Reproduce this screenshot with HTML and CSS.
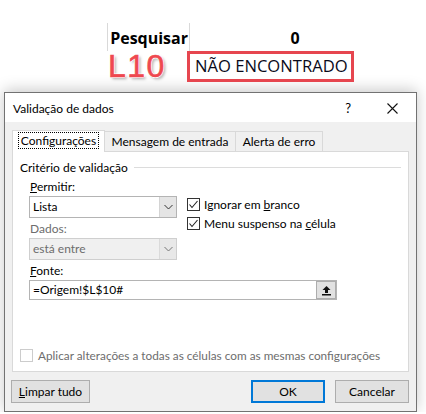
FILE: index.html
```html
<!DOCTYPE html>
<html lang="pt">
<head>
  <meta charset="UTF-8" />
  <meta name="viewport" content="width=device-width, initial-scale=1.0"/>
  <title>Validação de dados</title>
  <link rel="stylesheet" href="styles.css">
</head>
<body>
  <div class="sheet">
    <div class="row-head">
      <div class="cell-label">Pesquisar</div>
      <div class="cell-value">0</div>
    </div>
    <div class="row-result">
      <div class="ref">L10</div>
      <div class="result">NÃO ENCONTRADO</div>
    </div>
  </div>

  <div class="dialog">
    <div class="titlebar">
      <span class="title">Validação de dados</span>
      <span class="help">?</span>
      <svg class="close" width="11" height="11" viewBox="0 0 11 11">
        <path d="M0.5 0.5 L10.5 10.5 M10.5 0.5 L0.5 10.5" stroke="#111" stroke-width="1.1" fill="none"/>
      </svg>
    </div>

    <div class="body">
      <div class="tabs">
        <div class="tab active"><span class="focus">Configurações</span></div>
        <div class="tab tab-msg">Mensagem de entrada</div>
        <div class="tab tab-err">Alerta de erro</div>
      </div>

      <div class="panel">
        <div class="legend"><span>Critério de validação</span></div>

        <div class="label"><u>P</u>ermitir:</div>
        <div class="allow-row">
          <div class="select">
            <span class="value">Lista</span>
            <span class="arrow">
              <svg width="9" height="6" viewBox="0 0 9 6"><path d="M0.5 1 L4.5 5 L8.5 1" stroke="#333" fill="none"/></svg>
            </span>
          </div>
          <div class="checks">
            <div class="check"><span class="box">
              <svg width="11" height="11" viewBox="0 0 11 11"><path d="M1.5 5.5 L4 8.5 L9.5 2" stroke="#222" stroke-width="1.1" fill="none"/></svg>
            </span><span>Ignorar em <u>b</u>ranco</span></div>
            <div class="check"><span class="box">
              <svg width="11" height="11" viewBox="0 0 11 11"><path d="M1.5 5.5 L4 8.5 L9.5 2" stroke="#222" stroke-width="1.1" fill="none"/></svg>
            </span><span>Menu suspenso na <u>c</u>élula</span></div>
          </div>
        </div>

        <div class="label muted gap-dados">Dados:</div>
        <div class="select disabled">
          <span class="value">está entre</span>
          <span class="arrow">
            <svg width="9" height="6" viewBox="0 0 9 6"><path d="M0.5 1 L4.5 5 L8.5 1" stroke="#777" fill="none"/></svg>
          </span>
        </div>

        <div class="label gap-fonte"><u>F</u>onte:</div>
        <div class="source">
          <span class="value">=Origem!$L$10#</span>
          <span class="pick">
            <svg width="11" height="11" viewBox="0 0 11 11">
              <path d="M5.5 1 L1.5 5 L4 5 L4 8 L7 8 L7 5 L9.5 5 Z" fill="#111"/>
              <rect x="1" y="9" width="9" height="1.5" fill="#111"/>
            </svg>
          </span>
        </div>

        <div class="apply"><span class="box"></span><span>Aplicar alterações a todas as células com as mesmas configurações</span></div>
      </div>

      <div class="buttons">
        <button class="btn clear"><u>L</u>impar tudo</button>
        <button class="btn ok">OK</button>
        <button class="btn cancel">Cancelar</button>
      </div>
    </div>
  </div>
</body>
</html>
```

FILE: styles.css
```css
body {
  margin: 0;
  background: #ffffff;
  font-family: Lato, "Noto Sans", sans-serif;
  font-size: 12px;
  color: #000;
}

/* spreadsheet snippet above the dialog */
.sheet {
  height: 82px;
  padding-top: 23px;
  box-sizing: border-box;
}

.row-head {
  display: flex;
  height: 28px;
  margin-left: 107px;
}

.cell-label {
  width: 83px;
  border-left: 1px solid #d9d9d9;
  border-right: 1px solid #d9d9d9;
  font-family: "Open Sans", sans-serif;
  font-weight: bold;
  font-size: 16px;
  line-height: 30px;
  text-align: right;
  padding-right: 1px;
  box-sizing: border-box;
}

.cell-value {
  width: 210px;
  font-family: "Open Sans", sans-serif;
  font-weight: bold;
  font-size: 16px;
  line-height: 30px;
  text-align: center;
}

.row-result {
  display: flex;
  height: 31px;
  margin-left: 108px;
}

.ref {
  width: 79px;
  font-family: "Liberation Sans", Arial, sans-serif;
  font-size: 32px;
  line-height: 31px;
  letter-spacing: 1.5px;
  color: #ef4950;
  -webkit-text-stroke: 0.6px #ef4950;
  text-shadow: 1px 0 0 #fff, -1px 0 0 #fff, 0 1px 0 #fff, 0 -1px 0 #fff, 2px 2px 3px rgba(0,0,0,0.35);
}

.result {
  width: 167px;
  height: 31px;
  border: 3px solid #e6464f;
  box-sizing: border-box;
  font-family: "Open Sans", sans-serif;
  font-size: 16.6px;
  line-height: 24px;
  padding-left: 5px;
  color: #0a0a1a;
  background: #fff;
  position: relative;
  z-index: 2;
}

/* dialog */
.dialog {
  margin: 10px 0 0 4px;
  width: 413px;
  height: 320px;
  border: 1px solid #727272;
  box-sizing: border-box;
  background: #f0f0f0;
  box-shadow: 0 -2px 14px rgba(0,0,0,0.22);
  position: relative;
}

.titlebar {
  height: 29px;
  background: #fff;
  display: flex;
  align-items: center;
  padding-left: 8px;
}

.title {
  flex: 1;
  padding-top: 1px;
}

.help {
  font-size: 13px;
  margin-right: 36px;
  padding-top: 1px;
}

.close {
  margin-right: 18px;
  margin-top: 2px;
}

.body {
  padding: 9px 7px 0 7px;
}

.tabs {
  display: flex;
  align-items: flex-end;
  height: 20px;
}

.tab {
  height: 20px;
  line-height: 19px;
  text-align: center;
  border: 1px solid #d9d9d9;
  border-bottom: none;
  border-left: none;
  box-sizing: border-box;
  background: #f0f0f0;
}

.tab-msg { width: 131px; }
.tab-err { width: 87px; }

.tab.active {
  width: 93px;
  height: 22px;
  margin-bottom: -1px;
  background: #fff;
  border-left: 1px solid #d9d9d9;
  padding-top: 2px;
  position: relative;
  z-index: 1;
  line-height: 16px;
}

.focus {
  display: inline-block;
  outline: 1px dotted #000;
  padding: 0 2px;
  line-height: 15px;
}

.panel {
  width: 397px;
  height: 221px;
  border: 1px solid #d9d9d9;
  box-sizing: border-box;
  background: #fff;
  padding: 7px 0 0 7px;
}

.legend {
  display: flex;
  align-items: center;
  height: 16px;
  margin-right: 7px;
}

.legend::after {
  content: "";
  flex: 1;
  border-top: 1px solid #dcdcdc;
  margin-left: 6px;
}

.label {
  margin: 4px 0 0 10px;
  height: 16px;
  line-height: 16px;
}

.muted {
  color: #6d6d6d;
}

.gap-dados { margin-top: 3px; }
.gap-fonte { margin-top: 3px; }

.allow-row {
  display: flex;
  height: 22px;
  margin-left: 9px;
  margin-top: 1px;
}

.select {
  width: 148px;
  height: 22px;
  border: 1px solid #b4b4b4;
  box-sizing: border-box;
  display: flex;
  align-items: stretch;
  background: #fff;
}

.select .value {
  flex: 1;
  line-height: 20px;
  padding-left: 3px;
}

.select .arrow {
  width: 16px;
  background: #e5e5e5;
  border-left: 1px solid #d4d4d4;
  display: flex;
  align-items: center;
  justify-content: center;
}

.select.disabled {
  margin: 1px 0 0 9px;
  background: #f0f0f0;
  border-color: #cfcfcf;
  color: #6d6d6d;
}

.select.disabled .arrow {
  background: #e8e8e8;
  border-left-color: #dadada;
}

.checks {
  margin-left: 10px;
  margin-top: -1px;
}

.check {
  display: flex;
  align-items: center;
  height: 19px;
}

.box {
  width: 13px;
  height: 13px;
  border: 1px solid #333;
  box-sizing: border-box;
  background: #fff;
  margin-right: 4px;
  display: inline-flex;
  align-items: center;
  justify-content: center;
}

.source {
  margin: 1px 0 0 9px;
  width: 308px;
  height: 20px;
  border: 1px solid #b4b4b4;
  box-sizing: border-box;
  display: flex;
  background: #fff;
}

.source .value {
  flex: 1;
  line-height: 18px;
  padding-left: 3px;
}

.pick {
  width: 20px;
  height: 18px;
  background: #e1e1e1;
  border: 1px solid #adadad;
  box-sizing: border-box;
  display: flex;
  align-items: center;
  justify-content: center;
}

.apply {
  display: flex;
  align-items: center;
  margin-top: 48px;
  color: #6d6d6d;
  font-size: 11.8px;
}

.apply .box {
  border-color: #cccccc;
  margin-right: 5px;
}

.buttons {
  display: flex;
  margin-top: 8px;
  margin-left: -1px;
}

.btn {
  height: 23px;
  font-family: Lato, "Noto Sans", sans-serif;
  font-size: 12px;
  background: #e1e1e1;
  border: 1px solid #adadad;
  color: #000;
  padding: 0;
}

.clear { width: 79px; }

.ok {
  width: 74px;
  margin-left: auto;
  border: 2px solid #0078d7;
}

.cancel {
  width: 74px;
  margin-left: 10px;
}
```
